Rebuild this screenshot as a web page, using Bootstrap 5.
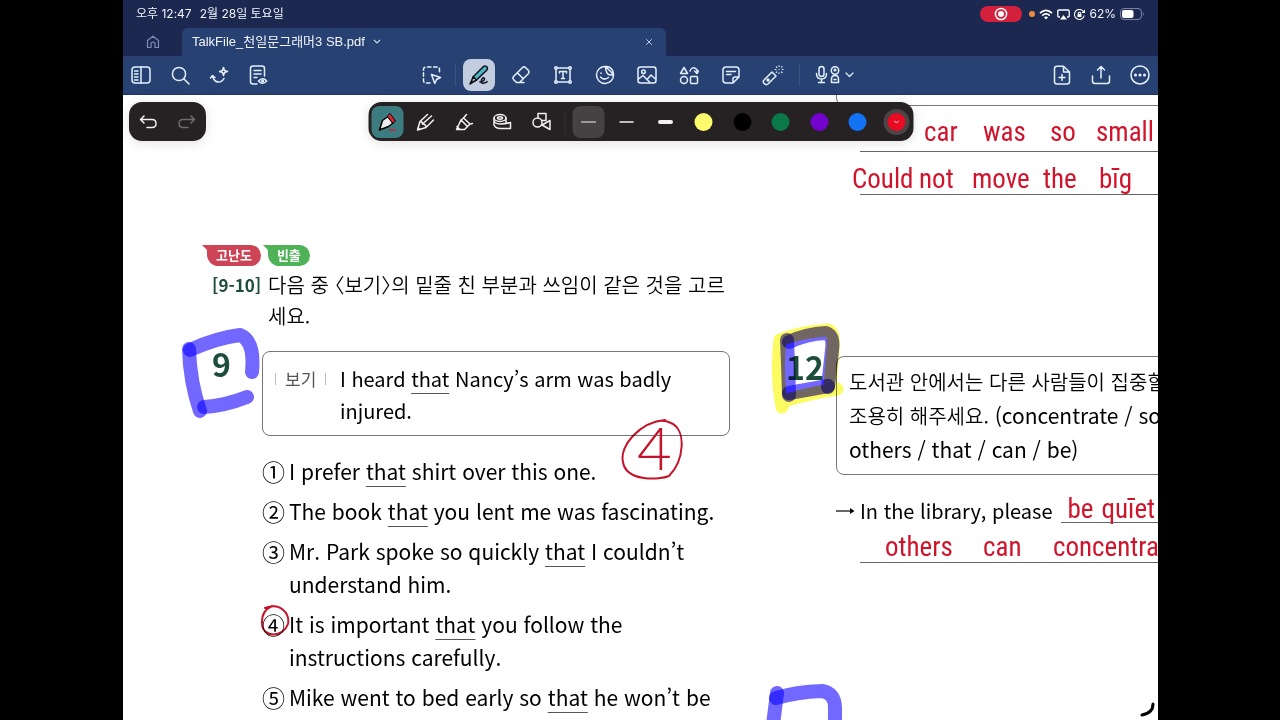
<!DOCTYPE html>
<html lang="ko">
<head>
<meta charset="utf-8">
<meta name="viewport" content="width=device-width, initial-scale=1">
<title>TalkFile_천일문그래머3 SB.pdf</title>
<link href="https://cdn.jsdelivr.net/npm/bootstrap@5.3.0/dist/css/bootstrap.min.css" rel="stylesheet">
<style>
body { background: #000; font-family: Inter, "Noto Sans CJK KR", sans-serif; color: #000; }
.tablet { height: 100vh; margin: 0 122px 0 123px; background: #fff; overflow: hidden; }
.bar-top { background: #1d2850; color: #f1f4fb; }
.status { height: 28px; font-size: 12px; padding: 0 14px 0 13px; }
.rec { width: 42px; height: 16px; background: #d3203c; margin-right: 3px; }
.cam-dot { width: 6px; height: 6px; background: #f08a3c; }
.tabs { height: 28px; }
.home-tab { width: 59px; color: #7d8bb0; }
.file-tab { width: 484px; background: #274272; border-radius: 6px 6px 0 0; font-family: "Liberation Sans", "Noto Sans CJK KR", sans-serif; font-size: 13px; color: #f1f4fb; padding: 0 10px; }
.tools { height: 39px; background: #274272; border-bottom: 1px solid #1d3460; color: #e4efff; }
.side { flex: 1 1 0; gap: 3px; }
.tool { width: 36px; height: 32px; padding: 0; border: 0; background: none; color: inherit; border-radius: 8px; display: flex; align-items: center; justify-content: center; }
.tool.on { width: 32px; margin: 0 2px; background: #c3cde0; color: #0b0f1a; }
.tool svg, .pen svg { display: block; fill: none; stroke: currentColor; stroke-width: 1.5; stroke-linecap: round; stroke-linejoin: round; }
.mic-tool { width: 51px; }
.tab-close { color: #b9c7e4; }
.center-tools { gap: 6px; padding-right: 7px; }
.split { width: 1px; height: 22px; background: #3a5482; }
.split.a { margin: 0 -1px; }
.split.b { margin: 0 3px 0 2px; }
.sheet { overflow: hidden; }
.float-bar { background: #262223; color: #f4eff0; border-radius: 13px; height: 39px; top: 7px; z-index: 3; box-shadow: 0 2px 12px #0000001f; }
.undo-bar { left: 6px; width: 77px; }
.faded { opacity: .35; }
.pen-bar { width: 545px; padding: 0 1px 0 3px; }
.pens { width: 186px; }
.pen { width: 32px; height: 32px; padding: 0; border: 0; background: none; color: inherit; border-radius: 8px; display: flex; align-items: center; justify-content: center; }
.pen.teal { background: #3c7c80; }
.pen.grey { background: #454243; }
.pen-split { width: 1px; height: 24px; background: #353132; margin: 0 7px; }
.dot { width: 18px; height: 18px; border-radius: 50%; display: block; }
.dot.ring { box-shadow: 0 0 0 4px #4a4647; }
.page-text { font-family: "Noto Sans CJK KR", sans-serif; font-size: 21px; line-height: 33px; }
.left-col { width: 607px; padding: 150px 0 0 89px; }
.right-col { width: 500px; margin-left: 106px; }
.tagrow { height: 22px; gap: 2px; margin: 0 0 2px -10px; }
.flag { position: relative; height: 21px; line-height: 20px; font-size: 13px; font-weight: 700; color: #fff; border-radius: 4px 11px 11px 12px; margin-left: 5px; padding: 0 9px; }
.flag::before { content: ""; position: absolute; left: -5px; top: 0; border-top: 7px solid; border-left: 7px solid transparent; border-top-color: inherit; }
.flag.r { background: #cc4455; border-color: #cc4455; }
.flag.g { background: #4fb257; border-color: #4fb257; }
.ko { font-size: 20px; font-weight: 350; }
.halfb { font-feature-settings: "halt"; }
.deep { color: #1c4d3b; font-weight: 700; }
.range { width: 56px; font-size: 17px; line-height: 31px; }
.ask { line-height: 31px; width: 470px; margin-bottom: 20px; }
.qnum { width: 50px; font-size: 32px; line-height: 24px; }
.boxed { border: 1px solid #777; border-radius: 8px; }
.example { height: 85px; padding: 11px 8px 6px 12px; font-size: 20px; line-height: 32px; margin-bottom: 19px; }
.ex-label { width: 65px; font-size: 17px; color: #555; }
.ex-label span { border: solid #bbb; border-width: 0 1px; padding: 0 9px; line-height: 12px; display: inline-block; }
.choices { list-style: none; margin: 0; padding: 0; }
.choices li { display: flex; margin-bottom: 7px; }
.choices .no { width: 27px; flex: none; font-size: 23px; }
u { text-decoration-thickness: 1px; text-underline-offset: 6px; text-decoration-color: #555; text-decoration-skip-ink: none; }
.prev-box { height: 11px; border: solid #777; border-width: 0 0 1px 1px; border-radius: 0 0 0 8px; }
.rule { border-bottom: 1px solid #666; margin-left: 24px; }
.pen-ink { font-family: "Roboto Condensed", Lato, sans-serif; color: #d0142c; font-size: 27px; line-height: 36px; display: grid; white-space: nowrap; }
.r1 { height: 45px; padding: 8px 0 0 88px; grid-template-columns: 59px 67px 46px 60px; }
.r2 { height: 42px; padding-top: 9px; margin-left: 16px; grid-template-columns: 67px 53px 71px 56px 50px; }
.r3 { grid-template-columns: 34px 80px; padding-left: 7px; height: 32px; width: 300px; }
.r4 { height: 39px; padding: 6px 0 0 49px; grid-template-columns: 98px 70px 120px; }
.q12 { margin-top: 161px; height: 119px; padding: 7px 12px; line-height: 34px; white-space: nowrap; }
.q12 .ko { line-height: 30px; }
.answer { height: 32px; margin-top: 16px; font-size: 20px; line-height: 32px; }
.ink { left: 0; top: 0; z-index: 2; pointer-events: none; fill: none; stroke-linecap: round; stroke-linejoin: round; mix-blend-mode: multiply; }
.ink path { mix-blend-mode: multiply; }
.big4 { left: 514px; top: 322px; font-size: 60px; line-height: 60px; z-index: 2; color: #c4142c; font-family: Lato, sans-serif; font-weight: 300; }
.n12 { left: 663px; top: 254px; font-size: 32px; line-height: 34px; }
</style>
</head>
<body>
<div class="tablet d-flex flex-column">
  <header class="bar-top">
    <div class="status d-flex align-items-center">
      <span class="me-2">오후 12:47</span><span>2월 28일 토요일</span>
      <div class="ms-auto d-flex align-items-center gap-1">
        <span class="rec rounded-pill d-flex align-items-center justify-content-center"><svg width="14" height="14" viewBox="0 0 14 14" fill="none" stroke="#fff" stroke-width="1.5"><circle cx="7" cy="7" r="5.6"/><circle cx="7" cy="7" r="2.2" fill="#fff"/></svg></span>
        <span class="cam-dot rounded-circle"></span>
        <svg width="14" height="11" viewBox="0 0 14 11" fill="none" stroke="#fff" stroke-width="1.8"><path d="M1 4.2Q7-1.4 13 4.2M3.2 6.6Q7 3.2 10.8 6.6"/><path d="M7 10.4 4.9 8.2Q7 6.6 9.1 8.2Z" fill="#fff" stroke="none"/></svg>
        <svg width="13" height="11" viewBox="0 0 13 11" fill="none" stroke="#fff" stroke-width="1.3"><path d="M3 8H2Q.8 8 .8 6.8V2.2Q.8 1 2 1H11Q12.200 1 12.200 2.200V6.800Q12.200 8 11 8H10"/><path d="M6.500 6 10 10.500H3Z" fill="#fff" stroke="none"/></svg>
        <svg width="11" height="11" viewBox="0 0 11 11" fill="none" stroke="#fff" stroke-width="1.1"><path d="M9.800 3A5 5 0 1 0 10.300 6.500M10.500 1V3.500H8"/><path d="M3.500 5H7.500V8H3.500Z" fill="#fff" stroke="none"/><path d="M4.300 5V4Q5.500 2.400 6.700 4V5"/></svg>
        <span>62%</span>
        <svg width="24" height="12" viewBox="0 0 24 12"><rect x=".5" y=".5" width="21" height="11" rx="3.500" fill="none" stroke="#7a84a6"/><rect x="2" y="2" width="11.500" height="8" rx="2" fill="#fff"/><path d="M23 4v4q1.500-2 0-4" fill="#7a84a6"/></svg>
      </div>
    </div>
    <nav class="tabs d-flex" aria-label="문서 탭">
      <a href="#" class="home-tab d-flex align-items-center justify-content-center" aria-label="홈"><svg width="14" height="14" viewBox="0 0 14 14" fill="none" stroke="currentColor" stroke-width="1.2" stroke-linejoin="round"><path d="M1.500 5.500 7 1.200 12.500 5.500V12.500H9V9Q9 7.200 7 7.200T5 9V12.500H1.500Z"/></svg></a>
      <div class="file-tab d-flex align-items-center gap-2">
        <span>TalkFile_천일문그래머3 SB.pdf</span>
        <svg width="8" height="6" viewBox="0 0 8 6" fill="none" stroke="#c6d3ec" stroke-width="1.200"><path d="m1 1 3 3 3-3"/></svg>
        <button class="tool tab-close ms-auto w-auto" aria-label="탭 닫기"><svg width="14" height="8" viewBox="0 0 14 8"><path stroke-width="1" d="m4.500 1.500 5 5m0-5-5 5"/></svg></button>
      </div>
    </nav>
  </header>

  <div class="tools d-flex align-items-center flex-shrink-0">
    <div class="side d-flex">
      <button class="tool" aria-label="사이드바"><svg width="20" height="18" viewBox="0 0 20 18"><rect x="1" y="1" width="18" height="16" rx="3"/><path d="M10 1V17M3.500 5H7M3.500 8H7M3.500 11H7M3.500 14H7"/></svg></button>
      <button class="tool" aria-label="검색"><svg width="19" height="19" viewBox="0 0 19 19"><circle cx="8" cy="8" r="6.600"/><path d="m13 13 5 5"/></svg></button>
      <button class="tool" aria-label="AI"><svg width="20" height="18" viewBox="0 0 20 18"><path d="M1.500 12 3.500 9.500 6 11.500M3.500 10Q5 16 9.500 16 13 16 15 12.500"/><path d="M14.500 1.500 15.500 4.500 18.500 5.500 15.500 6.500 14.500 9.500 13.500 6.500 10.500 5.500 13.500 4.500Z"/></svg></button>
      <button class="tool" aria-label="읽기"><svg width="19" height="20" viewBox="0 0 19 20"><path d="M8 19H4Q1.500 19 1.500 16.500V3.500Q1.500 1 4 1H13Q15.500 1 15.500 3.500V11M5 5.500H12M5 9H12M5 12.500H8"/><path d="M9.500 16Q13.500 11.500 17.800 16 13.500 20.500 9.500 16Z"/><circle cx="13.600" cy="16" r=".8"/></svg></button>
    </div>
    <div class="center-tools d-flex align-items-center">
      <button class="tool" aria-label="선택"><svg width="20" height="20" viewBox="0 0 20 20"><path stroke-dasharray="3.500 2.600" d="M8 18H4Q1.500 18 1.500 15.500V4.500Q1.500 2 4 2H15Q17.500 2 17.500 4.500V8"/><path d="M9.500 9.500 18.500 12.500 14.500 14.500 12.800 18.500Z"/></svg></button>
      <span class="split a"></span>
      <button class="tool on" aria-label="펜" aria-pressed="true"><svg width="22" height="22" viewBox="0 0 22 22"><path fill="#4db9c4" d="M14.500 3.500Q16.500 1 18.500 2.500T18.500 6.500L8.500 16 5 13Z"/><path fill="#e6d2b8" d="M5 13 8.500 16 2.500 19.500Z"/><path d="M2 20 4 17M12 18Q17 17 16.500 14.500 15 12.500 13.500 16 12.500 20 16 19T19 17.500"/></svg></button>
      <button class="tool" aria-label="지우개"><svg width="20" height="20" viewBox="0 0 20 20"><path d="M2.500 11.500 11.500 2.500Q13 1.200 14.500 2.500L17.500 5.500Q18.700 7 17.500 8.500L8.500 17.500H5.500L2.500 14.500Q1.200 13 2.500 11.500ZM6.500 8 12.300 13.800M8.500 17.500H13"/></svg></button>
      <button class="tool" aria-label="텍스트"><svg width="20" height="20" viewBox="0 0 20 20"><path d="M4.500 3H15.500M4.500 17H15.500M3 4.500V15.500M17 4.500V15.500"/><circle cx="3" cy="3" r="1.300"/><circle cx="17" cy="3" r="1.300"/><circle cx="3" cy="17" r="1.300"/><circle cx="17" cy="17" r="1.300"/><path d="M6.500 8V6.500H13.500V8M10 6.500V13.500M8.500 13.500H11.500"/></svg></button>
      <button class="tool" aria-label="스티커"><svg width="20" height="20" viewBox="0 0 20 20"><path d="M10.500 1.500A8.500 8.500 0 1 0 18.500 9.500ZM10.500 1.500Q14.500 1 17 4.500 18.500 6.500 18.500 9.500 14 11 12 8 10.500 5.500 10.500 1.500M6 8.500V8M5.500 12Q9 16 13.500 12.500"/></svg></button>
      <button class="tool" aria-label="이미지"><svg width="20" height="18" viewBox="0 0 20 18"><rect x="1" y="1" width="18" height="16" rx="2.500"/><circle cx="6.500" cy="5.800" r="1.800"/><path d="M1.500 13 6 9.500 13 16.500M10 13.500 14 9 18.500 13"/></svg></button>
      <button class="tool" aria-label="요소"><svg width="20" height="19" viewBox="0 0 20 19"><path d="M5 1.500 8.500 7.500H1.500ZM11 5Q13-.5 18 3.500V7M15.500 5 18 7.500 19.500 5"/><circle cx="5" cy="14" r="3.500"/><rect x="11.500" y="10.500" width="7" height="7" rx="1"/></svg></button>
      <button class="tool" aria-label="메모"><svg width="18" height="18" viewBox="0 0 18 18"><path d="M11 17H4Q1 17 1 14V4Q1 1 4 1H14Q17 1 17 4V11ZM11 17V13Q11 11 13 11H17M4.500 5.500H13.500M4.500 8.500H9"/></svg></button>
      <button class="tool" aria-label="레이저"><svg width="22" height="21" viewBox="0 0 22 21"><path d="m2 15 8-8 4 4-8 8Q4 20.500 2.200 18.500T2 15Z"/><circle cx="6" cy="15" r="1"/><path stroke-width="1.200" d="M17 4.500V4.600M17 .8V1.500M17 7.800V8.500M13.200 4.500H14M20.200 4.500H21M14.300 1.800l.5.500M19.500 7l.5.500M19.500 2.200l.5-.5M14.300 7.300l.5-.5"/></svg></button>
      <span class="split b"></span>
      <button class="tool mic-tool" aria-label="녹음"><svg width="40" height="20" viewBox="0 0 40 20"><rect x="4" y="1.500" width="5" height="10" rx="2.500"/><path d="M1.500 8.500Q1.500 14 6.500 14T11.500 8.500M6.500 14V17M3.500 17.500H9.500"/><circle cx="20" cy="5.500" r="3.700"/><circle cx="20" cy="5" r=".8"/><path d="M16.500 17.500V14Q16.500 10.500 20 10.500T23.500 14V17.500ZM19 14.500H21"/><path stroke-width="1.200" d="M31 8 34.500 11.500 38 8"/></svg></button>
    </div>
    <div class="side d-flex justify-content-end">
      <button class="tool" aria-label="페이지 추가"><svg width="18" height="20" viewBox="0 0 18 20"><path d="M4 1.200H10.500L16.500 7V16.500Q16.500 19 14 19H4Q1.500 19 1.500 16.500V3.700Q1.500 1.200 4 1.200ZM10.500 1.200V7H16.500M9 9.500V15.500M6 12.500H12"/></svg></button>
      <button class="tool" aria-label="공유"><svg width="20" height="20" viewBox="0 0 20 20"><path d="M1.500 11V16Q1.500 18.500 4 18.500H16Q18.500 18.500 18.500 16V11M10 13V2M6.500 5 10 1.500 13.500 5"/></svg></button>
      <button class="tool" aria-label="더보기"><svg width="20" height="20" viewBox="0 0 20 20"><circle cx="10" cy="10" r="9"/><path stroke-width="3" d="M5.500 10h.01M10 10h.01M14.500 10h.01"/></svg></button>
    </div>
  </div>

  <main class="sheet position-relative flex-grow-1">
    <div class="float-bar undo-bar position-absolute d-flex align-items-center justify-content-around">
      <button class="pen" aria-label="실행 취소"><svg width="19" height="16" viewBox="0 0 19 16"><path d="M5 2 1.500 5.500 5 9M1.500 5.500H13Q17 5.500 17 9.500T13 13.500H8"/></svg></button>
      <button class="pen faded" aria-label="다시 실행"><svg width="19" height="16" viewBox="0 0 19 16"><path d="M14 2 17.500 5.500 14 9M17.500 5.500H6Q2 5.500 2 9.500T6 13.500H11"/></svg></button>
    </div>
    <div class="float-bar pen-bar position-absolute start-50 translate-middle-x d-flex align-items-center">
      <div class="pens d-flex justify-content-between">
        <button class="pen teal" aria-label="만년필"><svg width="20" height="20" viewBox="0 0 20 20"><path stroke="#000" fill="#eee" d="M2 18 5 8.500 10.500 4.500 15.500 11 11 14.500Z"/><path stroke="#000" stroke-width="1" fill="#e02434" d="M10 4 12.500 1.500 18 9 15.500 11Z"/><path stroke="#c23" d="M12 18H18"/></svg></button>
        <button class="pen" aria-label="볼펜"><svg width="20" height="20" viewBox="0 0 20 20"><path d="M2 18 4.500 9.500 12 2.500M10.500 15.500 18 8M4.500 9.500Q7 9.500 7 12 10.500 12 10.500 15.500L2 18M7 12 16 4M2.500 15.500 4.500 17.500"/></svg></button>
        <button class="pen" aria-label="형광펜"><svg width="20" height="20" viewBox="0 0 20 20"><path d="M2 17.500 6.500 8 13 14.500 10 17.500H2M6.500 8 9 6 15.500 12 13 14.500M9 6 12 2.500M15.500 12 18 11.500M2.500 14.500 5.500 17.500"/></svg></button>
        <button class="pen" aria-label="테이프"><svg width="20" height="18" viewBox="0 0 20 18"><ellipse cx="7.500" cy="5" rx="6" ry="3.500"/><ellipse cx="7.500" cy="5" rx="2.500" ry="1.200"/><path d="M1.500 5V12Q3 15.500 8 15.500H18V9.500Q12 11 8 11 3 11 1.500 8M13.500 5V10"/></svg></button>
        <button class="pen" aria-label="도형"><svg width="20" height="19" viewBox="0 0 20 19"><path d="M6.500 6V1.500H14.500V8.500H10.500M18.500 8.500V17.500L10.500 13Z"/><circle cx="6" cy="10.500" r="4.500"/></svg></button>
      </div>
      <span class="pen-split"></span>
      <div class="d-flex flex-grow-1 justify-content-between">
        <button class="pen grey" aria-label="얇은 선"><svg width="16" height="4" viewBox="0 0 16 4"><path stroke-width="1" d="M1 2H15"/></svg></button>
        <button class="pen" aria-label="중간 선"><svg width="16" height="4" viewBox="0 0 16 4"><path stroke-width="1.500" d="M1.500 2H14.500"/></svg></button>
        <button class="pen" aria-label="굵은 선"><svg width="16" height="4" viewBox="0 0 16 4"><path stroke-width="4" d="M2.500 2H13.500"/></svg></button>
        <button class="pen" aria-label="노랑"><span class="dot" style="background:#fffb6d"></span></button>
        <button class="pen" aria-label="검정"><span class="dot" style="background:#000"></span></button>
        <button class="pen" aria-label="초록"><span class="dot" style="background:#0a7849"></span></button>
        <button class="pen" aria-label="보라"><span class="dot" style="background:#7303cc"></span></button>
        <button class="pen" aria-label="파랑"><span class="dot" style="background:#1273f5"></span></button>
        <button class="pen" aria-label="빨강"><span class="dot ring d-flex align-items-center justify-content-center" style="background:#ea0a22"><svg width="6" height="4" viewBox="0 0 6 4"><path stroke-width="1" d="m1 1 2 2 2-2"/></svg></span></button>
      </div>
    </div>

    <div class="page-text d-flex">
      <section class="left-col flex-shrink-0">
        <div class="tagrow d-flex"><span class="flag r">고난도</span><span class="flag g">빈출</span></div>
        <div class="d-flex">
          <div class="range deep flex-shrink-0">[9-10]</div>
          <p class="ask ko flex-shrink-0">다음 중 <span class="halfb">〈</span>보기<span class="halfb">〉</span>의 밑줄 친 부분과 쓰임이 같은 것을 고르<br>세요.</p>
        </div>
        <div class="d-flex">
          <div class="qnum deep flex-shrink-0">9</div>
          <div class="flex-grow-1">
            <div class="example boxed d-flex">
              <div class="ex-label flex-shrink-0"><span>보기</span></div>
              <div>I heard <u>that</u> Nancy’s arm was badly<br>injured.</div>
            </div>
            <ol class="choices">
              <li><span class="no">①</span><span>I prefer <u>that</u> shirt over this one.</span></li>
              <li><span class="no">②</span><span>The book <u>that</u> you lent me was fascinating.</span></li>
              <li><span class="no">③</span><span>Mr. Park spoke so quickly <u>that</u> I couldn’t<br>understand him.</span></li>
              <li><span class="no">④</span><span>It is important <u>that</u> you follow the<br>instructions carefully.</span></li>
              <li><span class="no">⑤</span><span>Mike went to bed early so <u>that</u> he won’t be</span></li>
            </ol>
          </div>
        </div>
      </section>
      <section class="right-col flex-shrink-0">
        <div class="prev-box"></div>
        <div class="pen-ink r1"><span>car</span><span>was</span><span>so</span><span>small</span></div>
        <div class="rule"></div>
        <div class="pen-ink r2"><span>Could</span><span>not</span><span>move</span><span>the</span><span>bīg</span></div>
        <div class="rule"></div>
        <div class="q12 boxed"><span class="ko">도서관 안에서는 다른 사람들이 집중할</span><br><span class="ko">조용히 해주세요.</span> (concentrate / so<br>others / that / can / be)</div>
        <div class="answer d-flex text-nowrap">
          <svg class="flex-shrink-0 mt-2" width="24" height="24" viewBox="0 0 24 24" fill="none" stroke="#000" stroke-width="1.200"><path d="M0 12H17"/><path d="m14 9 4.500 3-4.500 3Z" fill="#000" stroke="none"/></svg>
          <span class="pt-1">In the library, please</span>
          <div class="pen-ink r3 rule ms-2"><span>be</span><span>quīet</span></div>
        </div>
        <div class="pen-ink r4"><span>others</span><span>can</span><span>concentra</span></div>
        <div class="rule"></div>
      </section>
    </div>
    <div class="n12 deep page-text position-absolute">12</div>
    <div class="big4 position-absolute">4</div>
    <svg class="ink position-absolute" width="1035" height="625" viewBox="123 95 1035 625">
      <g stroke="#7268ff" stroke-width="14">
        <path d="M190 350Q216 338 240 335 255 341 252 372"/>
        <path d="M189 349Q190 382 200 411"/>
        <path d="M204 407Q224 406 247 397"/>
        <path d="M789 342Q806 334 826 333 834 336 832 350L828 387"/>
        <path d="M787 340Q788 360 789 395"/>
        <path d="M789 393 828 386"/>
        <path d="M776 698Q796 692 822 691 835 693 835 708V725"/>
        <path d="M777 693 773 725"/>
      </g>
      <path stroke="#fdfb62" stroke-width="13" d="M837 389Q810 393 784 401L782 407Q776 375 780 340 800 332 828 330 835 332 833 350L830 388"/>
      <g stroke="#c4142c" stroke-width="2">
        <path d="M665 420C640 422 619 446 623 462 626 482 660 480 669 476 684 461 687 430 671 423Q663 419 655 422"/>
        <path d="M265 608C281 602 290 614 288 624 283 638 263 638 262 624Q261 611 272 606"/>
        <path d="M851 140h.1M882 140h.1M890 140h.1M898 140h.1"/>
      </g>
      <path stroke="#000" stroke-width="3" d="M1153 704Q1153 713 1142 715"/>
    </svg>
  </main>
</div>
<script src="https://cdn.jsdelivr.net/npm/bootstrap@5.3.0/dist/js/bootstrap.bundle.min.js"></script>
</body>
</html>
